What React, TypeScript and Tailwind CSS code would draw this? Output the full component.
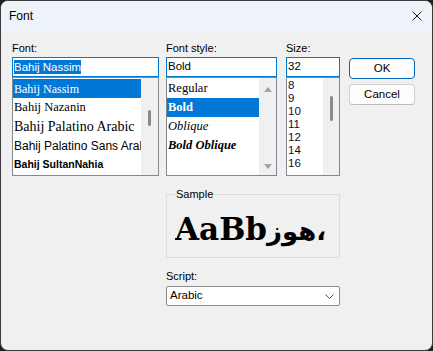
import type { ReactNode } from 'react'

const sans = "font-['Liberation_Sans',Arial,sans-serif]"
const serif = "font-['Liberation_Serif','Times_New_Roman',serif]"

function Label({ children }: { children: ReactNode }) {
  return <div className="h-[15px] text-[11px] leading-[13px]">{children}</div>
}

function UpArrow() {
  return (
    <svg width="8" height="5" viewBox="0 0 8 5">
      <path d="M0 5 L4 0 L8 5 Z" fill="#a3a3a3" />
    </svg>
  )
}

function DownArrow() {
  return (
    <svg width="8" height="5" viewBox="0 0 8 5">
      <path d="M0 0 L8 0 L4 5 Z" fill="#a3a3a3" />
    </svg>
  )
}

const sizes = ['8', '9', '10', '11', '12', '14', '16']

export default function App() {
  return (
    <div className="h-[351px] w-[433px] bg-[#1f1f1f]">
      <div
        className={`flex h-full flex-col overflow-hidden rounded-[8px] border border-[#3c3c3c] bg-[#f0f0f0] text-black ${sans}`}
      >
        {/* title bar */}
        <div className="flex h-[30px] shrink-0 items-center justify-between bg-[#eef2f9] pl-[8px] pr-[10px]">
          <span className="text-[12px]">Font</span>
          <svg width="10" height="10" viewBox="0 0 10 10" className="mb-[1px]">
            <path d="M0.5 0.5 L9.5 9.5 M9.5 0.5 L0.5 9.5" stroke="#1a1a1a" strokeWidth="1" />
          </svg>
        </div>

        <div className="flex flex-col pl-[11px] pt-[11px]">
          <div className="flex items-start">
            {/* Font */}
            <div className="flex w-[147px] flex-col">
              <Label>Font:</Label>
              <div className="flex h-[20px] items-center border border-[#0078d4] bg-white pl-[1px]">
                <span className="bg-[#0078d7] text-[11.5px] leading-[14px] text-white">Bahij Nassim</span>
              </div>
              <div className="flex h-[99px] border border-[#828790] bg-white">
                <div className="flex w-[128px] flex-col overflow-hidden whitespace-nowrap pt-[1px]">
                  <div className={`flex h-[19px] shrink-0 items-center bg-[#0078d7] pl-[1px] text-[12px] text-white ${serif}`}>
                    Bahij Nassim
                  </div>
                  <div className={`flex h-[19px] shrink-0 items-center pl-[1px] text-[12.5px] ${serif}`}>
                    Bahij Nazanin
                  </div>
                  <div className={`flex h-[19px] shrink-0 items-center pl-[1px] text-[14px] ${serif}`}>
                    Bahij Palatino Arabic
                  </div>
                  <div className="flex h-[19px] shrink-0 items-center pl-[1px] text-[12px]">
                    Bahij Palatino Sans Arabic
                  </div>
                  <div className="flex h-[19px] shrink-0 items-center pl-[1px] text-[10.5px] font-bold">
                    Bahij SultanNahia
                  </div>
                </div>
                <div className="flex w-[17px] shrink-0 flex-col items-center bg-[#f0f0f0]">
                  <div className="mt-[32px] h-[16px] w-[3px] rounded-full bg-[#8a8a8a]" />
                </div>
              </div>
            </div>

            {/* Font style */}
            <div className="ml-[7px] flex w-[111px] flex-col">
              <Label>Font style:</Label>
              <div className="flex h-[20px] items-center border border-[#0078d4] bg-white pl-[1px] text-[11.5px]">
                Bold
              </div>
              <div className="flex h-[99px] border border-[#828790] bg-white">
                <div className={`flex w-[92px] flex-col overflow-hidden whitespace-nowrap pt-[1px] text-[12.5px] ${serif}`}>
                  <div className="flex h-[19px] shrink-0 items-center pl-[1px]">Regular</div>
                  <div className="flex h-[19px] shrink-0 items-center bg-[#0078d7] pl-[1px] font-bold text-white">
                    Bold
                  </div>
                  <div className="flex h-[19px] shrink-0 items-center pl-[1px] italic">Oblique</div>
                  <div className="flex h-[19px] shrink-0 items-center pl-[1px] font-bold italic">Bold Oblique</div>
                </div>
                <div className="flex w-[17px] shrink-0 flex-col items-center justify-between bg-[#f0f0f0] pb-[6px] pt-[9px]">
                  <UpArrow />
                  <DownArrow />
                </div>
              </div>
            </div>

            {/* Size */}
            <div className="ml-[9px] flex w-[54px] flex-col">
              <Label>Size:</Label>
              <div className="flex h-[20px] items-center border border-[#0078d4] bg-white pl-[1px] text-[11.5px]">
                32
              </div>
              <div className="flex h-[99px] border border-[#828790] bg-white">
                <div className="flex w-[36px] flex-col overflow-hidden pt-[1px] text-[11.5px] text-[#1b0a1f]">
                  {sizes.map((s) => (
                    <div key={s} className="flex h-[13px] shrink-0 items-center pl-[1px]">
                      {s}
                    </div>
                  ))}
                </div>
                <div className="flex w-[16px] shrink-0 flex-col items-center bg-[#f0f0f0]">
                  <div className="mt-[18px] h-[25px] w-[3px] rounded-full bg-[#8a8a8a]" />
                </div>
              </div>
            </div>

            {/* buttons */}
            <div className="ml-[9px] mt-[16px] flex w-[66px] flex-col gap-[5px]">
              <button className="h-[21px] rounded-[4px] border border-[#0067c0] bg-[#fdfdfd] text-[11.5px]">OK</button>
              <button className="h-[21px] rounded-[4px] border border-[#d0d0d0] border-b-[#bcbcbc] bg-[#fdfdfd] text-[11.5px]">
                Cancel
              </button>
            </div>
          </div>

          {/* sample + script */}
          <div className="ml-[154px] mt-[13px] flex w-[174px] flex-col">
            <fieldset className="h-[69px] border border-[#dcdcdc] px-[8px]">
              <legend className="px-[1px] text-[11px] leading-[11px]">Sample</legend>
              <div className="mt-[7px] w-[152px] overflow-hidden whitespace-nowrap font-['DejaVu_Serif','DejaVu_Sans',serif] text-[31px] font-bold leading-[44px]">
                AaBb<span className="text-[26px]">هوز،</span>
              </div>
            </fieldset>
            <div className="mt-[12px] h-[16px] text-[11px] leading-[13px]">Script:</div>
            <div className="flex h-[20px] items-center justify-between rounded-[2px] border border-[#8c8c8c] bg-white pl-[3px] pr-[5px] text-[11.5px]">
              <span>Arabic</span>
              <svg width="9" height="5" viewBox="0 0 9 5">
                <path d="M0.5 0.5 L4.5 4.5 L8.5 0.5" fill="none" stroke="#555" strokeWidth="1" />
              </svg>
            </div>
          </div>
        </div>
      </div>
    </div>
  )
}
